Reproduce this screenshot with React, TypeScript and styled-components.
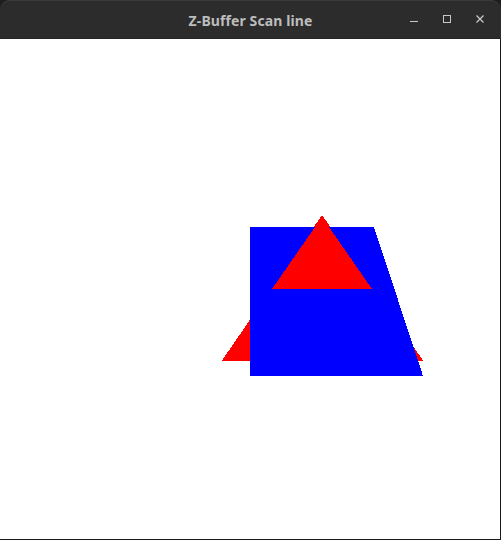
import styled, { createGlobalStyle } from "styled-components";

const Global = createGlobalStyle`
  html, body {
    margin: 0;
    padding: 0;
    background: #1e1e1e;
  }
`;

const Window = styled.div`
  width: 501px;
  height: 540px;
  display: flex;
  flex-direction: column;
  background: #1e1e1e;
  overflow: hidden;
`;

const TitleBar = styled.div`
  height: 38px;
  flex-shrink: 0;
  position: relative;
  display: flex;
  align-items: center;
  justify-content: center;
  background: #2c2c2c;
  border-radius: 10px 10px 0 0;
  box-shadow: inset 0 1px 0 #3a3a3a;
  border-bottom: 1px solid #242424;
`;

const Title = styled.span`
  font-family: "Noto Sans", "DejaVu Sans", sans-serif;
  font-weight: 700;
  font-size: 14px;
  color: #bdbdbd;
  letter-spacing: 0.1px;
  margin-top: 2px;
`;

const Controls = styled.div`
  position: absolute;
  right: 9px;
  top: 0;
  height: 38px;
  display: flex;
  align-items: center;
  gap: 8px;
`;

const CtrlButton = styled.div`
  width: 25px;
  height: 25px;
  display: flex;
  align-items: center;
  justify-content: center;
  color: #c8c8c8;
`;

const Canvas = styled.div`
  flex: 1;
  background: #ffffff;
  border-right: 1px solid #1a1a1a;
  border-bottom: 1px solid #1a1a1a;
`;

const Scene = styled.svg`
  display: block;
`;

export default function App() {
  return (
    <>
      <Global />
      <Window>
        <TitleBar>
          <Title>Z-Buffer Scan line</Title>
          <Controls>
            <CtrlButton>
              <svg width="10" height="10" viewBox="0 0 10 10">
                <rect x="1" y="7" width="8" height="1" fill="currentColor" />
              </svg>
            </CtrlButton>
            <CtrlButton>
              <svg width="10" height="10" viewBox="0 0 10 10">
                <rect x="1.5" y="1.5" width="7" height="7" fill="none" stroke="currentColor" strokeWidth="1" />
              </svg>
            </CtrlButton>
            <CtrlButton>
              <svg width="10" height="10" viewBox="0 0 10 10">
                <path d="M1.5 1.5 L8.5 8.5 M8.5 1.5 L1.5 8.5" stroke="currentColor" strokeWidth="1.3" />
              </svg>
            </CtrlButton>
          </Controls>
        </TitleBar>
        <Canvas>
          <Scene width="500" height="500" viewBox="0 39 500 500" shapeRendering="crispEdges">
            <polygon points="322,215 222,360.5 423,360.5" fill="#ff0000" />
            <polygon points="250,227 374,227 423,376 250,376" fill="#0000ff" />
            <polygon points="322,217 272,289 372,289" fill="#ff0000" />
          </Scene>
        </Canvas>
      </Window>
    </>
  );
}
